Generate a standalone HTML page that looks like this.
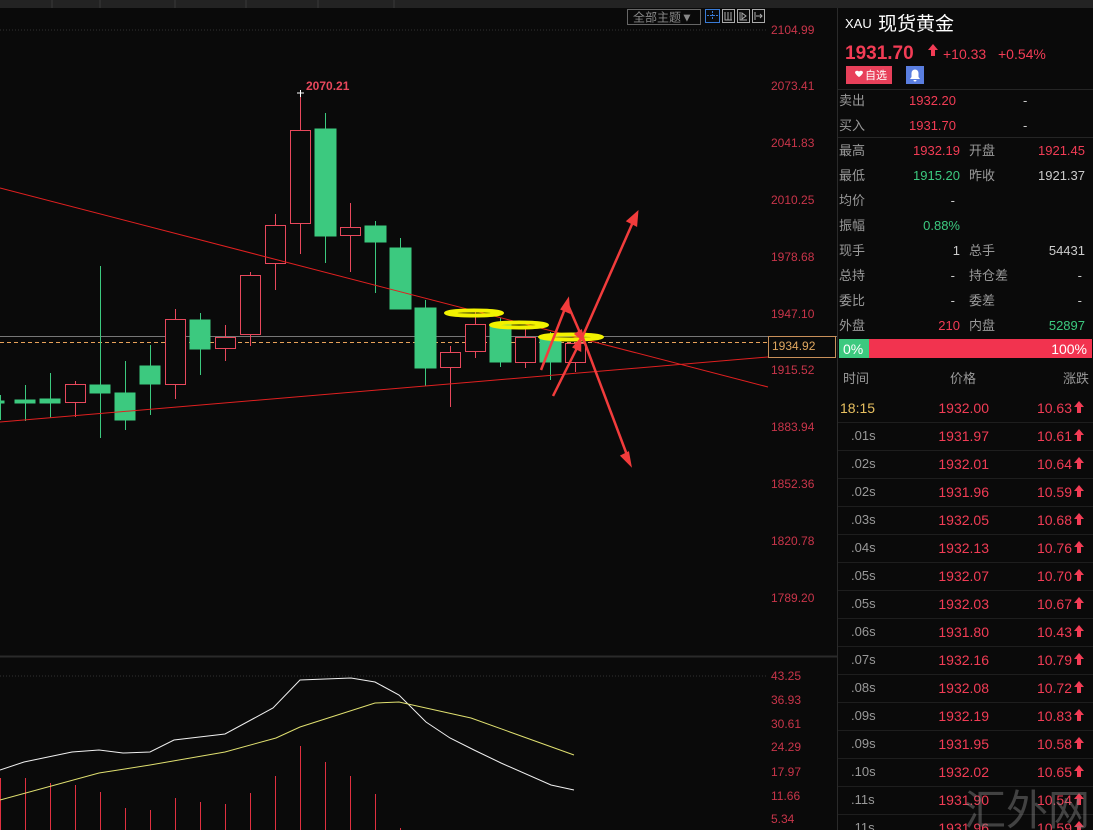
<!DOCTYPE html>
<html><head><meta charset="utf-8"><style>
html,body{margin:0;padding:0;background:#0a0a0a;width:1093px;height:830px;overflow:hidden}
svg{display:block}
text{font-family:"Liberation Sans","Noto Sans CJK SC",sans-serif}
</style></head><body>
<svg width="1093" height="830" viewBox="0 0 1093 830" xmlns="http://www.w3.org/2000/svg">
<rect width="1093" height="830" fill="#0a0a0a"/>
<rect x="0" y="0" width="1093" height="8" fill="#232323"/>
<g stroke="#3a3a3a"><line x1="52" y1="0" x2="52" y2="8"/><line x1="100" y1="0" x2="100" y2="8"/><line x1="175" y1="0" x2="175" y2="8"/><line x1="246" y1="0" x2="246" y2="8"/><line x1="318" y1="0" x2="318" y2="8"/><line x1="394" y1="0" x2="394" y2="8"/></g>
<line x1="0" y1="30" x2="766" y2="30" stroke="#333" stroke-dasharray="1,2"/>
<line x1="0" y1="676" x2="766" y2="676" stroke="#333" stroke-dasharray="1,2"/>
<line x1="837.5" y1="8" x2="837.5" y2="830" stroke="#2a2a2a"/>
<line x1="0" y1="656.5" x2="837" y2="656.5" stroke="#2a2a2a" stroke-width="2"/>
<rect x="627.5" y="9.5" width="73" height="15" fill="none" stroke="#666"/>
<text x="633" y="21.5" font-size="12" fill="#888">全部主题▼</text>
<rect x="705.5" y="9.5" width="14" height="13" fill="none" stroke="#3a7bd5"/>
<path d="M712.5 11v9M707 15.5h11" stroke="#3a7bd5" stroke-dasharray="2,1"/>
<rect x="722.5" y="9.5" width="12" height="13" fill="none" stroke="#aaa"/>
<path d="M725 12v8h7M728 12v8M731 12v8" stroke="#aaa" fill="none"/>
<rect x="737.5" y="9.5" width="12" height="13" fill="none" stroke="#aaa"/>
<path d="M740 12v8h7M742 13l4 3-4 3z" stroke="#aaa" fill="none"/>
<rect x="752.5" y="9.5" width="12" height="13" fill="none" stroke="#aaa"/>
<path d="M755 12v8M756 16h6M760 14l2 2-2 2" stroke="#aaa" fill="none"/>
<g font-size="12" fill="#c9354a">
<text x="771" y="34">2104.99</text><text x="771" y="90">2073.41</text><text x="771" y="147">2041.83</text><text x="771" y="204">2010.25</text><text x="771" y="261">1978.68</text><text x="771" y="318">1947.10</text><text x="771" y="374">1915.52</text><text x="771" y="431">1883.94</text><text x="771" y="488">1852.36</text><text x="771" y="545">1820.78</text><text x="771" y="602">1789.20</text>
<text x="771" y="680">43.25</text><text x="771" y="704">36.93</text><text x="771" y="728">30.61</text><text x="771" y="751">24.29</text><text x="771" y="776">17.97</text><text x="771" y="800">11.66</text><text x="771" y="823">5.34</text>
</g>
<line x1="0" y1="336.5" x2="837" y2="336.5" stroke="#777"/>
<line x1="0" y1="342.5" x2="768" y2="342.5" stroke="#e8a25a" stroke-dasharray="4,3"/>
<rect x="768.5" y="336.5" width="67" height="21" fill="#0a0a0a" stroke="#c8905a"/>
<text x="772" y="350" font-size="12" fill="#e0a860">1934.92</text>
<g stroke="#3cc97f" fill="#3cc97f">
<line x1="0.5" y1="395" x2="0.5" y2="420"/><rect x="0" y="401" width="4" height="2"/>
<line x1="25.5" y1="385" x2="25.5" y2="421"/><rect x="15" y="400" width="20" height="3"/>
<line x1="50.5" y1="373" x2="50.5" y2="418"/><rect x="40" y="399" width="20" height="4"/>
<line x1="100.5" y1="266" x2="100.5" y2="438"/><rect x="90" y="385" width="20" height="8"/>
<line x1="125.5" y1="361" x2="125.5" y2="430"/><rect x="115" y="393" width="20" height="27"/>
<line x1="150.5" y1="345" x2="150.5" y2="415"/><rect x="140" y="366" width="20" height="18"/>
<line x1="200.5" y1="313" x2="200.5" y2="375"/><rect x="190" y="320" width="20" height="29"/>
<line x1="325.5" y1="113" x2="325.5" y2="263"/><rect x="315" y="129" width="21" height="107"/>
<line x1="375.5" y1="221" x2="375.5" y2="293"/><rect x="365" y="226" width="21" height="16"/>
<line x1="400.5" y1="238" x2="400.5" y2="309"/><rect x="390" y="248" width="21" height="61"/>
<line x1="425.5" y1="300" x2="425.5" y2="386"/><rect x="415" y="308" width="21" height="60"/>
<line x1="500.5" y1="318" x2="500.5" y2="367"/><rect x="490" y="325" width="21" height="37"/>
<line x1="550.5" y1="332" x2="550.5" y2="380"/><rect x="540" y="338" width="21" height="24"/>
</g>
<g stroke="#e8485c" fill="#0a0a0a">
<line x1="75.5" y1="381" x2="75.5" y2="417"/><rect x="65.5" y="384.5" width="20" height="18"/>
<line x1="175.5" y1="309" x2="175.5" y2="399"/><rect x="165.5" y="319.5" width="20" height="65"/>
<line x1="225.5" y1="325" x2="225.5" y2="361"/><rect x="215.5" y="337.5" width="20" height="11"/>
<line x1="250.5" y1="272" x2="250.5" y2="346"/><rect x="240.5" y="275.5" width="20" height="59"/>
<line x1="275.5" y1="214" x2="275.5" y2="290"/><rect x="265.5" y="225.5" width="20" height="38"/>
<line x1="300.5" y1="93" x2="300.5" y2="254"/><rect x="290.5" y="130.5" width="20" height="93"/>
<line x1="350.5" y1="203" x2="350.5" y2="272"/><rect x="340.5" y="227.5" width="20" height="8"/>
<line x1="450.5" y1="346" x2="450.5" y2="407"/><rect x="440.5" y="352.5" width="20" height="15"/>
<line x1="475.5" y1="312" x2="475.5" y2="358"/><rect x="465.5" y="324.5" width="20" height="27"/>
<line x1="525.5" y1="328" x2="525.5" y2="368"/><rect x="515.5" y="337.5" width="20" height="25"/>
<line x1="575.5" y1="342" x2="575.5" y2="372"/><rect x="565.5" y="343.5" width="20" height="19"/>
</g>
<path d="M297 93h7M300.5 90v7" stroke="#fff"/>
<text x="306" y="90" font-size="12" font-weight="bold" fill="#e8485c">2070.21</text>
<line x1="0" y1="188" x2="768" y2="387" stroke="#e02020"/>
<line x1="0" y1="422" x2="768" y2="357" stroke="#e02020"/>
<g fill="none" stroke="#f2f200" stroke-width="4">
<ellipse cx="474" cy="313" rx="28" ry="2.5"/>
<ellipse cx="519" cy="325" rx="28" ry="2.5"/>
<ellipse cx="571" cy="337" rx="31" ry="2.5"/>
</g>
<g stroke="#f23c3c" stroke-width="2.5" fill="#f23c3c">
<line x1="541" y1="370" x2="566" y2="306"/><path d="M568 300l1 12-7-3z"/>
<line x1="568" y1="305" x2="581" y2="335"/><path d="M583 340l-7-6 5-3z"/>
<line x1="553" y1="396" x2="578" y2="346"/><path d="M580 340l0 10-6-3z"/>
<line x1="581" y1="340" x2="633" y2="222"/><path d="M637 213l-1 12-8-4z"/>
<line x1="583" y1="338" x2="627" y2="455"/><path d="M630 464l-8-8 6-3z"/>
</g>
<path stroke="#e03040" fill="none" d="M0.5 778V830M25.5 778V830M50.5 783V830M75.5 785V830M100.5 792V830M125.5 808V830M150.5 810V830M175.5 798V830M200.5 802V830M225.5 804V830M250.5 793V830M275.5 776V830M300.5 746V830M325.5 762V830M350.5 776V830M375.5 794V830M400.5 828V830"/>
<polyline fill="none" stroke="#f0f0f0" points="0,770 24,762 72,752 99,750 123,753 150,752 174,740 225,734 273,708 300,680 351,678 375,682 399,695 426,722 450,738 474,750 501,763 551,785 574,790"/>
<polyline fill="none" stroke="#e0e070" points="0,800 99,773 150,765 225,752 276,738 300,727 375,703 399,702 471,718 574,755"/>
<text x="845" y="28" font-size="13" fill="#fff">XAU</text>
<text x="878" y="30" font-size="19" fill="#fff">现货黄金</text>
<text x="845" y="59" font-size="19" font-weight="bold" fill="#f23c55">1931.70</text>
<path d="M933 44l-5 6h3v6h4v-6h3z" fill="#f23c55"/>
<text x="943" y="59" font-size="14" fill="#f23c55">+10.33</text>
<text x="998" y="59" font-size="14" fill="#f23c55">+0.54%</text>
<rect x="846" y="66" width="46" height="18" fill="#e8405a"/>
<path d="M855 72a2.5 2.5 0 0 1 4 -0.5a2.5 2.5 0 0 1 4 0.5c0 2.5-4 5-4 5s-4-2.5-4-5z" fill="#fff"/>
<text x="865" y="79" font-size="11" fill="#fff">自选</text>
<rect x="906" y="66" width="18" height="18" fill="#5a7ee0"/>
<path d="M910 79h10l-1.5-2v-4a3.5 3.5 0 0 0-7 0v4z M913.5 80h3a1.5 1.5 0 0 1-3 0z" fill="#fff"/>
<line x1="838" y1="89.5" x2="1093" y2="89.5" stroke="#252525"/>
<line x1="838" y1="137.5" x2="1093" y2="137.5" stroke="#252525"/>
<g font-size="13">
<g fill="#999">
<text x="839" y="105">卖出</text><text x="839" y="130">买入</text>
<text x="839" y="155">最高</text><text x="839" y="180">最低</text><text x="839" y="205">均价</text><text x="839" y="230">振幅</text><text x="839" y="255">现手</text><text x="839" y="280">总持</text><text x="839" y="305">委比</text><text x="839" y="330">外盘</text>
<text x="969" y="155">开盘</text><text x="969" y="180">昨收</text><text x="969" y="255">总手</text><text x="969" y="280">持仓差</text><text x="969" y="305">委差</text><text x="969" y="330">内盘</text>
</g>
<text x="909" y="105" fill="#f23c55">1932.20</text><text x="1023" y="105" fill="#ccc">-</text>
<text x="909" y="130" fill="#f23c55">1931.70</text><text x="1023" y="130" fill="#ccc">-</text>
<g text-anchor="end">
<text x="960" y="155" fill="#f23c55">1932.19</text><text x="1085" y="155" fill="#f23c55">1921.45</text>
<text x="960" y="180" fill="#3cc97f">1915.20</text><text x="1085" y="180" fill="#ccc">1921.37</text>
<text x="955" y="205" fill="#ccc">-</text>
<text x="960" y="230" fill="#3cc97f">0.88%</text>
<text x="960" y="255" fill="#ccc">1</text><text x="1085" y="255" fill="#ccc">54431</text>
<text x="955" y="280" fill="#ccc">-</text><text x="1082" y="280" fill="#ccc">-</text>
<text x="955" y="305" fill="#ccc">-</text><text x="1082" y="305" fill="#ccc">-</text>
<text x="960" y="330" fill="#f23c55">210</text><text x="1085" y="330" fill="#3cc97f">52897</text>
</g>
</g>
<rect x="839" y="339" width="30" height="19" fill="#3cc97f"/>
<rect x="869" y="339" width="223" height="19" fill="#f2334f"/>
<text x="843" y="354" font-size="14" fill="#fff">0%</text>
<text x="1087" y="354" font-size="14" fill="#fff" text-anchor="end">100%</text>
<g font-size="13" fill="#999">
<text x="843" y="383">时间</text><text x="950" y="383">价格</text><text x="1089" y="383" text-anchor="end">涨跌</text>
</g>
<g stroke="#1e1e1e">
<line x1="838" y1="422.5" x2="1093" y2="422.5"/><line x1="838" y1="450.5" x2="1093" y2="450.5"/><line x1="838" y1="478.5" x2="1093" y2="478.5"/><line x1="838" y1="506.5" x2="1093" y2="506.5"/><line x1="838" y1="534.5" x2="1093" y2="534.5"/><line x1="838" y1="562.5" x2="1093" y2="562.5"/><line x1="838" y1="590.5" x2="1093" y2="590.5"/><line x1="838" y1="618.5" x2="1093" y2="618.5"/><line x1="838" y1="646.5" x2="1093" y2="646.5"/><line x1="838" y1="674.5" x2="1093" y2="674.5"/><line x1="838" y1="702.5" x2="1093" y2="702.5"/><line x1="838" y1="730.5" x2="1093" y2="730.5"/><line x1="838" y1="758.5" x2="1093" y2="758.5"/><line x1="838" y1="786.5" x2="1093" y2="786.5"/><line x1="838" y1="814.5" x2="1093" y2="814.5"/>
</g>
<g font-size="14">
<text x="840" y="413" fill="#e8c060">18:15</text>
<g fill="#999" font-size="13">
<text x="851" y="440">.01s</text><text x="851" y="468">.02s</text><text x="851" y="496">.02s</text><text x="851" y="524">.03s</text><text x="851" y="552">.04s</text><text x="851" y="580">.05s</text><text x="851" y="608">.05s</text><text x="851" y="636">.06s</text><text x="851" y="664">.07s</text><text x="851" y="692">.08s</text><text x="851" y="720">.09s</text><text x="851" y="748">.09s</text><text x="851" y="776">.10s</text><text x="851" y="804">.11s</text><text x="851" y="832">.11s</text>
</g>
<g fill="#f23c55" text-anchor="end">
<text x="989" y="413">1932.00</text><text x="989" y="441">1931.97</text><text x="989" y="469">1932.01</text><text x="989" y="497">1931.96</text><text x="989" y="525">1932.05</text><text x="989" y="553">1932.13</text><text x="989" y="581">1932.07</text><text x="989" y="609">1932.03</text><text x="989" y="637">1931.80</text><text x="989" y="665">1932.16</text><text x="989" y="693">1932.08</text><text x="989" y="721">1932.19</text><text x="989" y="749">1931.95</text><text x="989" y="777">1932.02</text><text x="989" y="805">1931.90</text><text x="989" y="833">1931.96</text>
<text x="1072" y="413">10.63</text><text x="1072" y="441">10.61</text><text x="1072" y="469">10.64</text><text x="1072" y="497">10.59</text><text x="1072" y="525">10.68</text><text x="1072" y="553">10.76</text><text x="1072" y="581">10.70</text><text x="1072" y="609">10.67</text><text x="1072" y="637">10.43</text><text x="1072" y="665">10.79</text><text x="1072" y="693">10.72</text><text x="1072" y="721">10.83</text><text x="1072" y="749">10.58</text><text x="1072" y="777">10.65</text><text x="1072" y="805">10.54</text><text x="1072" y="833">10.59</text>
</g>
</g>
<g fill="#f23c55">
<path d="M1079 401l-5 6h3v6h4v-6h3z"/><path d="M1079 429l-5 6h3v6h4v-6h3z"/><path d="M1079 457l-5 6h3v6h4v-6h3z"/><path d="M1079 485l-5 6h3v6h4v-6h3z"/><path d="M1079 513l-5 6h3v6h4v-6h3z"/><path d="M1079 541l-5 6h3v6h4v-6h3z"/><path d="M1079 569l-5 6h3v6h4v-6h3z"/><path d="M1079 597l-5 6h3v6h4v-6h3z"/><path d="M1079 625l-5 6h3v6h4v-6h3z"/><path d="M1079 653l-5 6h3v6h4v-6h3z"/><path d="M1079 681l-5 6h3v6h4v-6h3z"/><path d="M1079 709l-5 6h3v6h4v-6h3z"/><path d="M1079 737l-5 6h3v6h4v-6h3z"/><path d="M1079 765l-5 6h3v6h4v-6h3z"/><path d="M1079 793l-5 6h3v6h4v-6h3z"/><path d="M1079 821l-5 6h3v6h4v-6h3z"/>
</g>
<text x="1027" y="825" font-size="42" fill="#888" fill-opacity="0.45" font-family="Noto Serif CJK SC, serif" text-anchor="middle">汇外网</text>
</svg>
</body></html>
